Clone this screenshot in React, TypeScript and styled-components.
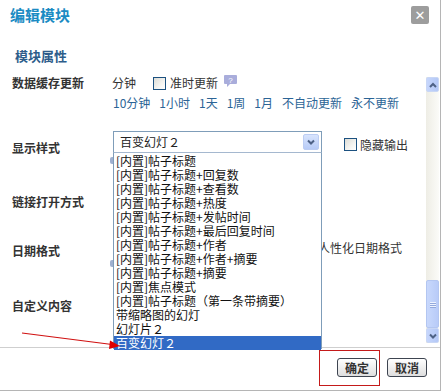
import React from "react";
import styled, {createGlobalStyle} from "styled-components";

const GlobalStyle = createGlobalStyle`
  html, body {
    margin: 0;
    padding: 0;
    background: #fff;
  }
  body {
    font-family: "Liberation Sans", "Noto Sans CJK SC", sans-serif;
    font-size: 12px;
    color: #333;
  }
`;

const Dialog = styled.div`
  position: relative;
  width: 440px;
  height: 390px;
  border-right: 1px solid #b5b5b5;
  border-bottom: 1px solid #b5b5b5;
  display: flex;
  flex-direction: column;
  background: #fff;
  overflow: hidden;
`;

const Header = styled.div`
  height: 40px;
  display: flex;
  justify-content: space-between;
  align-items: flex-start;
  padding: 5px 11px 0 10px;
  box-sizing: border-box;
`;

const Title = styled.div`
  font-family: "Noto Sans CJK SC", sans-serif;
  font-weight: bold;
  font-size: 15px;
  line-height: 19px;
  color: #1b8bc3;
`;

const CloseButton = styled.div`
  width: 18px;
  height: 18px;
  margin-top: 1px;
  border-radius: 2px;
  background: #9d9d9d;
  color: #fff;
  display: flex;
  align-items: center;
  justify-content: center;
  font-family: "DejaVu Sans", sans-serif;
  font-weight: bold;
  font-size: 13px;
  line-height: 1;
`;

const SectionTitle = styled.div`
  height: 35px;
  padding: 7px 0 0 15px;
  box-sizing: border-box;
  font-family: "Noto Sans CJK SC", sans-serif;
  font-weight: bold;
  font-size: 13px;
  line-height: 17px;
  color: #2d5c8a;
`;

const Pane = styled.div`
  height: 272px;
  display: flex;
`;

const Content = styled.div`
  flex: 1;
  padding-left: 12px;
  display: flex;
  flex-direction: column;
`;

const Row = styled.div<{$h: number}>`
  height: ${p => p.$h}px;
  display: flex;
  align-items: flex-start;
`;

const Label = styled.div<{$top: number}>`
  width: 100px;
  flex: none;
  margin-top: ${p => p.$top}px;
  font-family: "Noto Sans CJK SC", sans-serif;
  font-weight: bold;
  font-size: 12px;
  line-height: 16px;
  color: #333;
`;

const Value = styled.div`
  display: flex;
  flex-direction: column;
  gap: 4px;
  font-family: "Noto Sans CJK SC", sans-serif;
  font-size: 12px;
  line-height: 16px;
`;

const Line = styled.div<{$indent?: number}>`
  display: flex;
  align-items: center;
  padding-left: ${p => p.$indent ?? 0}px;
  gap: 4px;
`;

const Links = styled.div`
  display: flex;
  gap: 9px;
  padding-left: 1px;
  color: #2b6496;
`;

const Checkbox = styled.span<{$ml?: number}>`
  display: inline-block;
  width: 11px;
  height: 11px;
  margin-left: ${p => p.$ml ?? 0}px;
  border: 1px solid #1c5180;
  background: linear-gradient(135deg, #dcdcd6 0%, #f4f4f1 60%, #fff 100%);
`;

const Help = styled.svg`
  width: 13px;
  height: 12px;
  margin-left: 2px;
  margin-top: -5px;
`;

const SelectWrap = styled.div`
  position: relative;
  width: 209px;
  margin-left: 1px;
`;

const SelectBox = styled.div`
  height: 22px;
  box-sizing: border-box;
  border: 1px solid #7f9db9;
  background: #fff;
  display: flex;
  align-items: center;
  justify-content: space-between;
  padding: 0 2px 0 6px;
  color: #222;
`;

const ArrowButton = styled.span`
  width: 16px;
  height: 16px;
  border-radius: 2px;
  background: linear-gradient(#d8e4fd, #b7cbf7);
  border: 1px solid #bccdf3;
  box-sizing: border-box;
  display: flex;
  align-items: center;
  justify-content: center;
`;

const DropList = styled.ul`
  position: absolute;
  top: 21px;
  left: 0;
  width: 209px;
  height: 197px;
  margin: 0;
  padding: 1px 0 0;
  list-style: none;
  box-sizing: border-box;
  border: 1px solid #7f9db9;
  border-top-color: #a5b8cf;
  background: #fff;
  z-index: 2;
`;

const DropItem = styled.li<{$selected?: boolean}>`
  height: 14px;
  line-height: 14px;
  padding-left: 2px;
  font-family: "Noto Sans CJK SC", sans-serif;
  font-size: 12px;
  color: ${p => (p.$selected ? "#fff" : "#111")};
  background: ${p => (p.$selected ? "#316ac5" : "transparent")};
  white-space: nowrap;
`;

const Peek = styled.span<{$ml: number}>`
  display: inline-block;
  width: 7px;
  height: 7px;
  margin-left: ${p => p.$ml}px;
  border-radius: 2px;
  background: #9fb0d0;
`;

const HideOutput = styled.label`
  display: flex;
  align-items: center;
  gap: 3px;
  margin: 5px 0 0 22px;
  font-family: "Noto Sans CJK SC", sans-serif;
  color: #333;
`;

const ScrollBar = styled.div`
  width: 13px;
  margin: 2px 1px 4px 0;
  display: flex;
  flex-direction: column;
  background: linear-gradient(90deg, #eeede5, #fbfbf8);
`;

const ScrollButton = styled.div`
  height: 15px;
  border-radius: 2px;
  background: linear-gradient(90deg, #c6d6fc, #b4c8f6);
  border: 1px solid #c9d7f5;
  box-sizing: border-box;
  display: flex;
  align-items: center;
  justify-content: center;
`;

const Track = styled.div`
  flex: 1;
  display: flex;
  flex-direction: column;
  justify-content: flex-end;
`;

const Thumb = styled.div`
  height: 48px;
  border-radius: 2px;
  border: 1px solid #b3c6f1;
  box-sizing: border-box;
  background: linear-gradient(90deg, #c8d8fc, #b8cbf8);
  display: flex;
  flex-direction: column;
  align-items: center;
  justify-content: center;
  gap: 1px;
  span {
    width: 6px;
    height: 1px;
    background: #eef3ff;
    box-shadow: 0 1px 0 #93a9dc;
  }
`;

const Footer = styled.div`
  flex: 1;
  border-top: 1px solid #cfcfcf;
  display: flex;
  justify-content: flex-end;
  align-items: flex-start;
  gap: 10px;
  padding: 10px 13px 0 0;
`;

const Button = styled.button`
  width: 40px;
  height: 19px;
  padding: 0;
  border: 1px solid #3d4450;
  border-radius: 3px;
  background: linear-gradient(#ffffff, #dedede);
  font-family: "Noto Sans CJK SC", sans-serif;
  font-weight: bold;
  font-size: 12px;
  line-height: 16px;
  color: #333;
`;

const Annotation = styled.svg`
  position: absolute;
  left: 0;
  top: 0;
  width: 441px;
  height: 391px;
  pointer-events: none;
  z-index: 3;
`;

const options = [
    "[内置]帖子标题",
    "[内置]帖子标题+回复数",
    "[内置]帖子标题+查看数",
    "[内置]帖子标题+热度",
    "[内置]帖子标题+发帖时间",
    "[内置]帖子标题+最后回复时间",
    "[内置]帖子标题+作者",
    "[内置]帖子标题+作者+摘要",
    "[内置]帖子标题+摘要",
    "[内置]焦点模式",
    "[内置]帖子标题（第一条带摘要）",
    "带缩略图的幻灯",
    "幻灯片２",
    "百变幻灯２",
];

const Chevron = ({up}: {up?: boolean}) => (
    <svg width="8" height="6" viewBox="0 0 8 6">
        <path d={up ? "M1 5 L4 2 L7 5" : "M1 1.5 L4 4.5 L7 1.5"} fill="none" stroke="#4d6185" strokeWidth="2"/>
    </svg>
);

const App = () => {
    const selected = "百变幻灯２";
    return (
        <Dialog>
            <GlobalStyle/>
            <Header>
                <Title>编辑模块</Title>
                <CloseButton>✕</CloseButton>
            </Header>
            <SectionTitle>模块属性</SectionTitle>
            <Pane>
                <Content>
                    <Row $h={56}>
                        <Label $top={0}>数据缓存更新</Label>
                        <Value>
                            <Line>
                                分钟
                                <Checkbox $ml={13}/>
                                准时更新
                                <Help viewBox="0 0 13 12">
                                    <path d="M1 0 H12 A1 1 0 0 1 13 1 V8 A1 1 0 0 1 12 9 H6 L3 12 V9 H1 A1 1 0 0 1 0 8 V1 A1 1 0 0 1 1 0 Z" fill="#a9addb"/>
                                    <text x="6.5" y="7.5" textAnchor="middle" fontSize="8" fontFamily="Liberation Sans" fill="#fff">?</text>
                                </Help>
                            </Line>
                            <Links>
                                <span>10分钟</span>
                                <span>1小时</span>
                                <span>1天</span>
                                <span>1周</span>
                                <span>1月</span>
                                <span>不自动更新</span>
                                <span>永不更新</span>
                            </Links>
                        </Value>
                    </Row>
                    <Row $h={59}>
                        <Label $top={9}>显示样式</Label>
                        <Value>
                            <SelectWrap>
                                <SelectBox>
                                    <span>{selected}</span>
                                    <ArrowButton><Chevron/></ArrowButton>
                                </SelectBox>
                                <DropList>
                                    {options.map(o => (
                                        <DropItem key={o} $selected={o === selected}>{o}</DropItem>
                                    ))}
                                </DropList>
                            </SelectWrap>
                            <Peek $ml={-2}/>
                        </Value>
                        <HideOutput>
                            <Checkbox/>
                            隐藏输出
                        </HideOutput>
                    </Row>
                    <Row $h={50}>
                        <Label $top={4}>链接打开方式</Label>
                    </Row>
                    <Row $h={55}>
                        <Label $top={3}>日期格式</Label>
                        <Value>
                            <Line $indent={206}>人性化日期格式</Line>
                            <Peek $ml={-2}/>
                        </Value>
                    </Row>
                    <Row $h={52}>
                        <Label $top={3}>自定义内容</Label>
                    </Row>
                </Content>
                <ScrollBar>
                    <ScrollButton><Chevron up/></ScrollButton>
                    <Track>
                        <Thumb><span/><span/><span/></Thumb>
                    </Track>
                    <ScrollButton><Chevron/></ScrollButton>
                </ScrollBar>
            </Pane>
            <Footer>
                <Button>确定</Button>
                <Button>取消</Button>
            </Footer>
            <Annotation viewBox="0 0 441 391">
                <line x1="22" y1="333" x2="112" y2="344.5" stroke="#d01010" strokeWidth="1.2"/>
                <path d="M120 346 L110 340.5 L109 349 Z" fill="#e00000"/>
                <rect x="319.5" y="350.5" width="60" height="35" fill="none" stroke="#c41a1a" strokeWidth="1"/>
            </Annotation>
        </Dialog>
    );
};

export default App;
